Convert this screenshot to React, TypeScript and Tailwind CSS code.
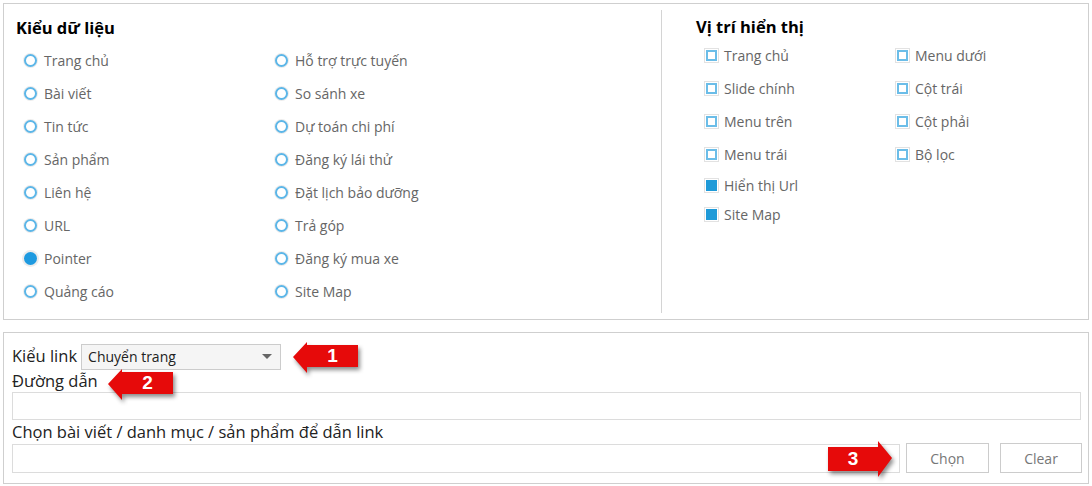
import React from "react";

const FONT = { fontFamily: '"Open Sans", "Noto Sans", sans-serif' };

const dataTypes = [
  ["Trang chủ", "Hỗ trợ trực tuyến"],
  ["Bài viết", "So sánh xe"],
  ["Tin tức", "Dự toán chi phí"],
  ["Sản phẩm", "Đăng ký lái thử"],
  ["Liên hệ", "Đặt lịch bảo dưỡng"],
  ["URL", "Trả góp"],
  ["Pointer", "Đăng ký mua xe"],
  ["Quảng cáo", "Site Map"],
];

const positions: { left: string; right?: string; checked?: boolean; h: string }[] = [
  { left: "Trang chủ", right: "Menu dưới", h: "h-[33px]" },
  { left: "Slide chính", right: "Cột trái", h: "h-[33px]" },
  { left: "Menu trên", right: "Cột phải", h: "h-[33px]" },
  { left: "Menu trái", right: "Bộ lọc", h: "h-[32px]" },
  { left: "Hiển thị Url", checked: true, h: "h-[30px]" },
  { left: "Site Map", checked: true, h: "h-[28px]" },
];

function Radio({ label, checked }: { label: string; checked?: boolean }) {
  return (
    <div className="flex items-center gap-[7px]">
      {checked ? (
        <span className="w-[13px] h-[13px] rounded-full bg-[#1e9ae0] ring-2 ring-[#ececec] shrink-0" />
      ) : (
        <span className="w-[13px] h-[13px] rounded-full border-[2.5px] border-[#5cb6e8] bg-white ring-1 ring-[#ececec] shrink-0" />
      )}
      <span className="text-[14px] text-[#666]">{label}</span>
    </div>
  );
}

function Check({ label, checked }: { label: string; checked?: boolean }) {
  return (
    <div className="flex items-center gap-[5px]">
      <span className="w-[15px] h-[15px] border border-[#e2e2e2] flex items-center justify-center shrink-0">
        {checked ? (
          <span className="w-[11px] h-[11px] bg-[#1e9ad8]" />
        ) : (
          <span className="w-[11px] h-[11px] border-2 border-[#6bbde8] bg-white" />
        )}
      </span>
      <span className="text-[14px] text-[#666]">{label}</span>
    </div>
  );
}

function LeftArrow({ num, className }: { num: string; className: string }) {
  return (
    <div className={`absolute ${className}`}>
      <svg width="72" height="38" viewBox="0 0 72 38" style={{ filter: "drop-shadow(2px 3px 2px rgba(0,0,0,0.45))" }}>
        <polygon points="1,15 15,0 15,3 66,3 66,25 15,25 15,31" fill="#e60a0a" />
      </svg>
      <span className="absolute left-[15px] w-[51px] top-[3px] h-[22px] flex items-center justify-center text-white font-bold text-[19px]" style={{ fontFamily: '"Liberation Sans", Arial, sans-serif' }}>
        {num}
      </span>
    </div>
  );
}

function RightArrow({ num, className }: { num: string; className: string }) {
  return (
    <div className={`absolute ${className}`}>
      <svg width="72" height="42" viewBox="0 0 72 42" style={{ filter: "drop-shadow(2px 3px 2px rgba(0,0,0,0.45))" }}>
        <polygon points="0,6 50,6 50,0 64,17 50,36 50,30 0,30" fill="#e60a0a" />
      </svg>
      <span className="absolute left-0 w-[50px] top-[6px] h-[24px] flex items-center justify-center text-white font-bold text-[19px]" style={{ fontFamily: '"Liberation Sans", Arial, sans-serif' }}>
        {num}
      </span>
    </div>
  );
}

export default function App() {
  return (
    <div className="relative w-[1092px] h-[486px] bg-white pt-[3px] pl-[3px]" style={FONT}>
      {/* top panel */}
      <div className="w-[1086px] h-[317px] border border-[#cfcfcf] flex">
        <div className="w-[657px] pl-[12px] pt-[13px]">
          <div className="text-[16.5px] font-bold text-black leading-[22px] mb-[5px]">Kiểu dữ liệu</div>
          <div className="pl-[8px]">
            {dataTypes.map(([a, b]) => (
              <div key={a} className="flex h-[33px] items-center">
                <div className="w-[251px]">
                  <Radio label={a} checked={a === "Pointer"} />
                </div>
                <Radio label={b} />
              </div>
            ))}
          </div>
        </div>
        <div className="my-[6px] border-l border-[#d4d4d4]" />
        <div className="pl-[34px] pt-[12px]">
          <div className="text-[16.5px] font-bold text-black leading-[22px] mb-[1px]">Vị trí hiển thị</div>
          <div className="pl-[8px]">
            {positions.map((p) => (
              <div key={p.left} className={`flex items-center ${p.h}`}>
                <div className="w-[191px]">
                  <Check label={p.left} checked={p.checked} />
                </div>
                {p.right && <Check label={p.right} />}
              </div>
            ))}
          </div>
        </div>
      </div>

      {/* bottom panel */}
      <div className="mt-[12px] w-[1086px] h-[152px] border border-[#cfcfcf] pl-[8px] pr-[6px] pt-[10px]">
        <div className="flex items-center h-[27px] gap-[4px]">
          <span className="text-[16.5px] text-[#222]">Kiểu link</span>
          <div className="w-[200px] h-[26px] border border-[#cccccc] bg-[#f5f5f5] flex items-center justify-between pl-[6px] pr-[8px]">
            <span className="text-[14px] text-[#222]">Chuyển trang</span>
            <svg width="10" height="5" viewBox="0 0 10 5">
              <polygon points="0,0 10,0 5,5" fill="#666" />
            </svg>
          </div>
        </div>
        <div className="text-[16.5px] text-[#222] leading-[22px] h-[22px]">Đường dẫn</div>
        <div className="h-[28px] border border-[#dcdcdc] bg-white mr-[1px]" />
        <div className="text-[16.5px] text-[#222] leading-[22px] h-[22px] mt-[1px]">
          Chọn bài viết / danh mục / sản phẩm để dẫn link
        </div>
        <div className="flex items-center gap-[6px]">
          <div className="w-[888px] h-[29px] border border-[#dcdcdc] bg-white" />
          <button className="w-[83px] h-[30px] border border-[#cccccc] bg-white text-[14px] text-[#777]">Chọn</button>
          <button className="ml-[5px] w-[82px] h-[30px] border border-[#cccccc] bg-white text-[14px] text-[#777]">Clear</button>
        </div>
      </div>

      <LeftArrow num="1" className="left-[292px] top-[342px]" />
      <LeftArrow num="2" className="left-[107px] top-[369px]" />
      <RightArrow num="3" className="left-[828px] top-[441px]" />
    </div>
  );
}
